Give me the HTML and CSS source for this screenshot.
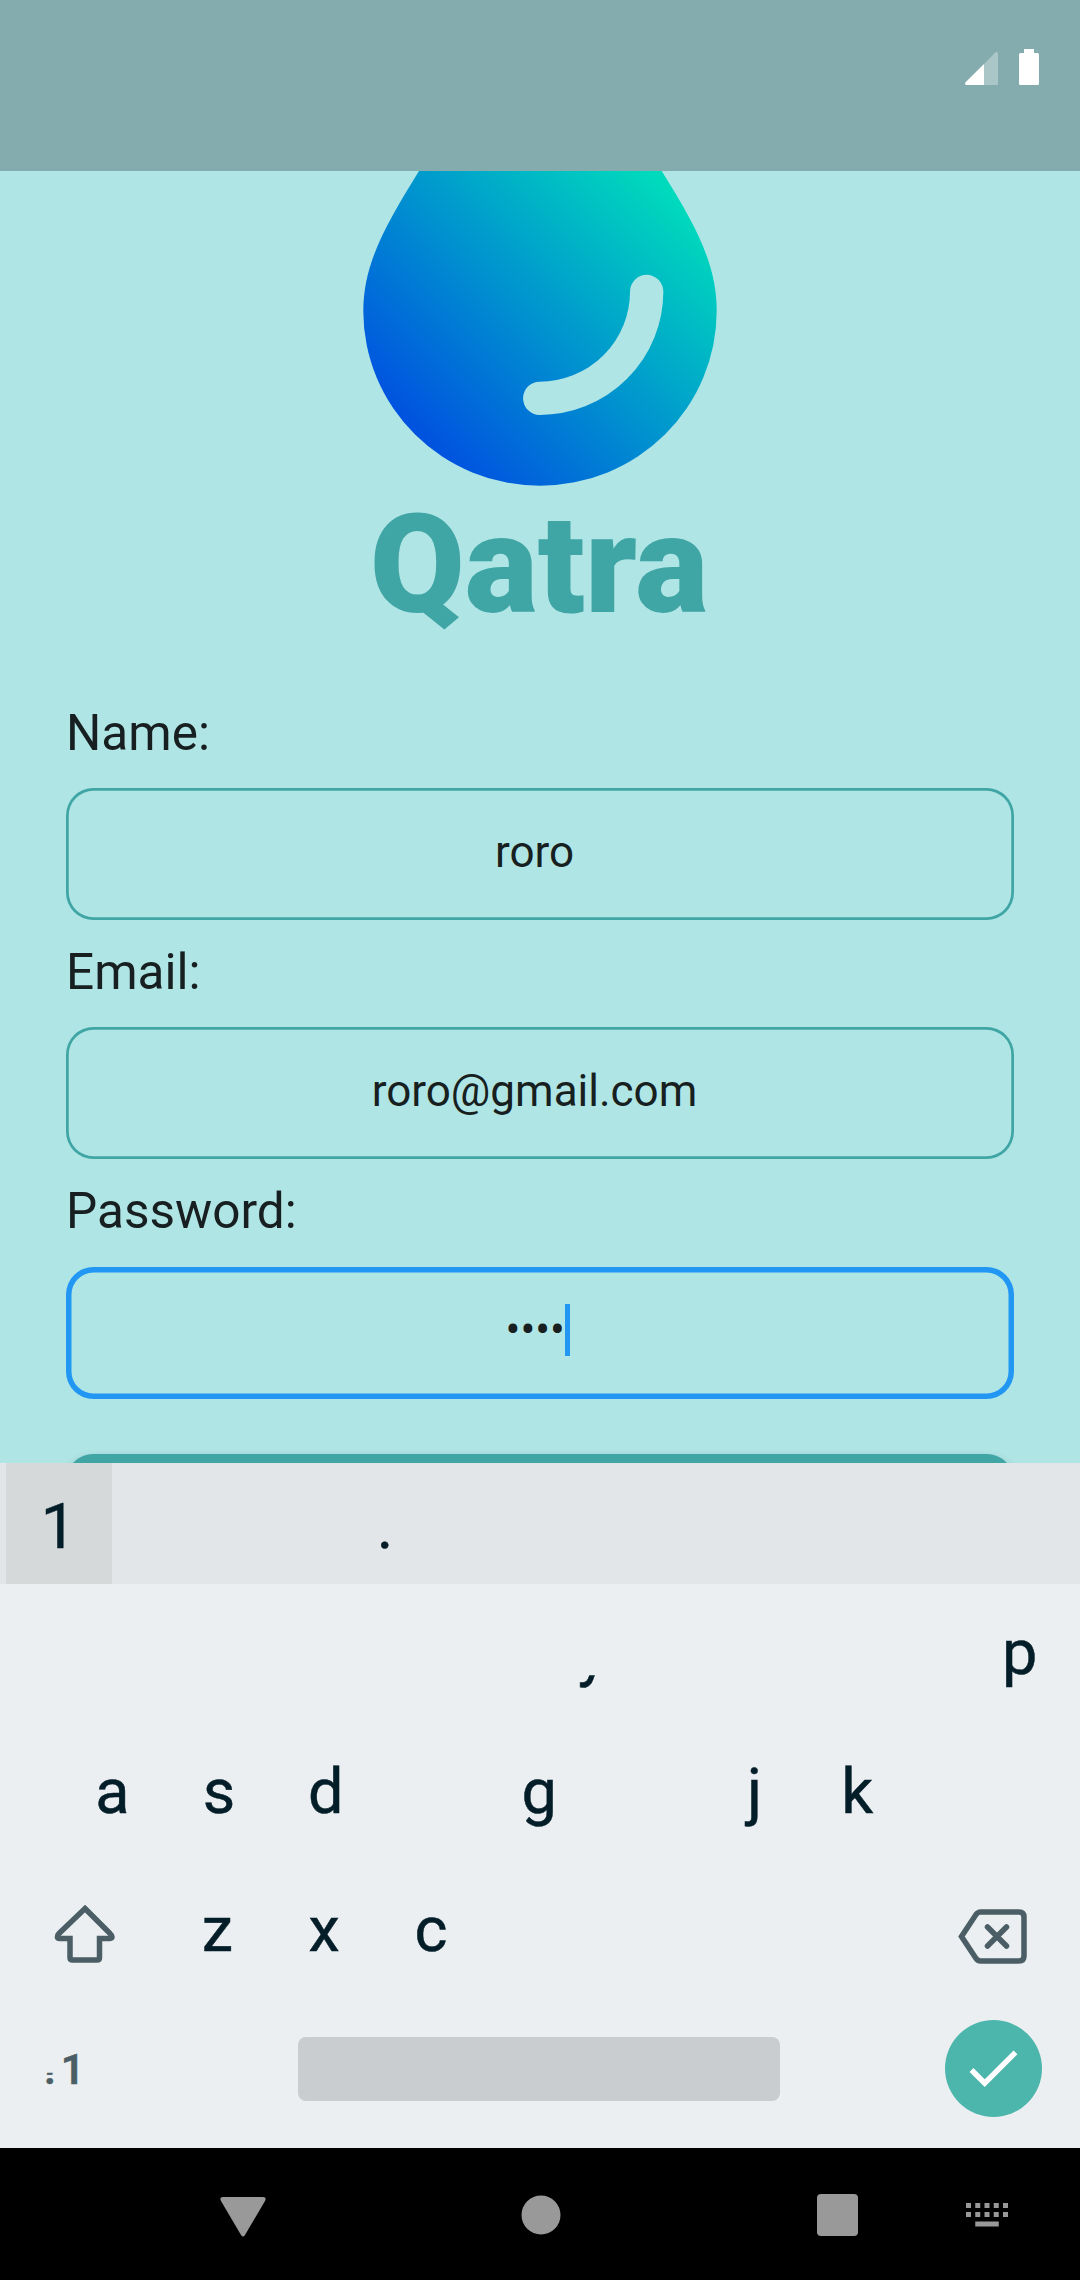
FILE: index.html
```html
<!DOCTYPE html>
<html lang="en">
<head>
<meta charset="utf-8">
<title>Qatra</title>
<link rel="stylesheet" href="styles.css">
</head>
<body>
<div class="screen">
  <header class="status">
    <svg class="signal" viewBox="0 0 33 33"><path d="M19 12V33H32a1 1 0 0 0 1-1V1.500Q33 0 31.500 0 30.800 0 30 .8L19 12z" fill="#fff" fill-opacity=".32"/><path d="M19 12V33H1.500Q0 33 0 31.500 0 30.800 .8 30z" fill="#fff"/></svg>
    <svg class="battery" viewBox="0 0 20 36"><path d="M5 0H15V4H18.500Q20 4 20 5.500V34.500Q20 36 18.500 36H1.500Q0 36 0 34.500V5.500Q0 4 1.500 4H5z" fill="#fff"/></svg>
  </header>

  <main class="page">
    <svg class="drop" viewBox="363 171 354 315">
      <defs>
        <linearGradient id="water" gradientUnits="userSpaceOnUse" x1="430" y1="452" x2="680" y2="202">
          <stop offset="0" stop-color="#0051e0"/>
          <stop offset="1" stop-color="#00dabc"/>
        </linearGradient>
      </defs>
      <path d="M419 171C385 226 363.300 264 363.300 311A176.700 174.700 0 0 0 716.700 311C716.700 264 696 226 661.700 171z" fill="url(#water)"/>
      <path d="M646.700 291.500A107 107 0 0 1 539.700 398.300" fill="none" stroke="#b0e5e6" stroke-width="33.300" stroke-linecap="round"/>
    </svg>
    <h1 class="brand">Qatra</h1>
    <form class="form">
      <div class="group"><div class="label">Name:</div><div class="field">roro</div></div>
      <div class="group"><div class="label">Email:</div><div class="field">roro@gmail.com</div></div>
      <div class="group"><div class="label">Password:</div><div class="field focused">••••<span class="caret"></span></div></div>
      <div class="submit"></div>
    </form>
  </main>

  <section class="keyboard">
    <div class="numbers"><span class="pressed">1</span><span></span><span></span><span class="dot">.</span></div>
    <div class="row top"><span class="tail">y</span><span class="last">p</span></div>
    <div class="row home"><span>a</span><span>s</span><span>d</span><span></span><span>g</span><span></span><span class="j">j</span><span class="k">k</span><span></span></div>
    <div class="row bottom">
      <svg class="shift" viewBox="0 0 62 60"><path d="M31 4.500L56 29.500C59 32 58.500 34.500 56 34.500H45.500V53.500Q45.500 56 43 56H18.500Q16 56 16 53.500V34.500H5.500C3 34.500 2.500 32 5 29.500z" fill="none" stroke="#4b5d65" stroke-width="5.500"/></svg>
      <span>z</span><span>x</span><span>c</span>
      <svg class="erase" viewBox="0 0 69 55"><path d="M3.500 27.500L18 5.500Q20 3 22.500 3H61Q66 3 66 8V47Q66 52 61 52H22.500Q20 52 18 49.500z" fill="none" stroke="#4b5d65" stroke-width="5.500"/><path d="M29.500 18L48.500 37M48.500 18L29.500 37" stroke="#4b5d65" stroke-width="5.500" stroke-linecap="round"/></svg>
    </div>
    <div class="row actions">
      <span class="symbols"><span class="mark">?</span><span>1</span></span>
      <span class="space"></span>
      <span class="done"><svg viewBox="0 0 97 97"><path d="M26.500 50L39.700 63.200 70.500 32.400" fill="none" stroke="#fff" stroke-width="5.500"/></svg></span>
    </div>
  </section>

  <nav class="nav">
    <svg class="back" viewBox="0 0 46 40"><path d="M3 0H43Q47 0 45 4L25 38Q23 41 21 38L1 4Q-1 0 3 0z"/></svg>
    <svg class="home-icon" viewBox="0 0 40 40"><circle cx="20" cy="20" r="19.500"/></svg>
    <svg class="recent" viewBox="0 0 41 42"><rect width="41" height="42" rx="4"/></svg>
    <svg class="ime" viewBox="0 0 42 24"><path d="M0 0h5v5H0zM9.250 0h5v5h-5zM18.500 0h5v5h-5zM27.750 0h5v5h-5zM37 0h5v5h-5zM0 9h5v5H0zM9.250 9h5v5h-5zM18.500 9h5v5h-5zM27.750 9h5v5h-5zM37 9h5v5h-5zM9.250 18.500h23.500v5H9.250z"/></svg>
  </nav>
</div>
</body>
</html>
```
FILE: styles.css
```css
body { margin: 0; }
* { box-sizing: border-box; }
svg { display: block; flex: none; }

.screen {
  width: 1080px;
  height: 2280px;
  display: flex;
  flex-direction: column;
  overflow: hidden;
  background: #b0e5e6;
  font-family: Roboto, sans-serif;
}

.status {
  height: 171px;
  flex: none;
  display: flex;
  justify-content: flex-end;
  gap: 21px;
  padding: 49px 41px 0 0;
  background: #84abad;
}
.signal { width: 33px; height: 33px; margin-top: 3px; }
.battery { width: 20px; height: 36px; }

.page {
  height: 1292px;
  flex: none;
  overflow: hidden;
}
.drop { width: 354px; height: 315px; margin: 0 auto; }
.brand {
  margin: -1px 0 0;
  padding-right: 2px;
  font-size: 137.5px;
  line-height: 161px;
  font-weight: 900;
  text-align: center;
  color: #40a6a5;
}
.form { padding: 57.6px 66px 0; }
.group { height: 239.25px; }
.label {
  height: 84.5px;
  font-size: 49.5px;
  line-height: 58px;
  color: #171f20;
}
.field {
  height: 132px;
  display: flex;
  align-items: center;
  justify-content: center;
  padding: 0 11px 5px 0;
  border-radius: 27.5px;
  box-shadow: inset 0 0 0 2.75px #40a6a5;
  font-size: 44px;
  color: #171f20;
}
.focused { box-shadow: inset 0 0 0 5.5px #2196f3; padding-right: 4px; }
.caret { width: 5.5px; height: 52px; background: #2196f3; }
.submit {
  height: 132px;
  margin-top: 32.4px;
  border-radius: 27.5px;
  background: #40a6a5;
  box-shadow: 0 5px 10px rgba(0, 0, 0, .3);
}

.keyboard {
  height: 685px;
  flex: none;
  background: #ebeff1;
  color: #041e29;
  font-size: 63px;
  -webkit-text-stroke: .5px currentColor;
}
.numbers {
  height: 121px;
  display: grid;
  grid-template-columns: repeat(10, 106px);
  padding: 0 6px;
  background: #e2e6e9;
}
.numbers span {
  display: flex;
  align-items: center;
  justify-content: center;
  padding: 6px 1px 0 0;
}
.numbers .pressed { background: #d5d9da; }
.numbers .dot { padding-left: 17px; }

.row {
  height: 138.5px;
  display: grid;
  grid-template-columns: repeat(10, 106.8px);
  align-items: center;
  justify-items: center;
  padding: 0 7px 0 5px;
  line-height: 74px;
}
.tail { grid-column: 6; clip-path: inset(59px -4px -4px -4px); }
.last { grid-column: 10; }
.home { padding: 0 59px; grid-template-columns: repeat(9, 106.7px); }
.j { padding-left: 4px; }
.k { padding-right: 4px; }
.bottom { grid-template-columns: 159px repeat(7, 106.8px) 1fr; }
.shift { width: 62px; height: 60px; margin-top: 7px; }
.erase { width: 69px; height: 55px; grid-column: 9; margin-top: 12px; }
.actions {
  display: flex;
  justify-content: space-between;
  padding: 0 38px 0 40px;
}
.symbols {
  width: 258px;
  display: flex;
  padding-top: 2px;
  font-size: 42px;
  font-weight: 600;
  line-height: 50px;
  color: #4b5d65;
}
.mark { clip-path: inset(28px 0 0 0); }
.space { width: 482px; height: 64px; border-radius: 8px; background: #c9cdd0; }
.done {
  width: 97px;
  height: 97px;
  margin-left: 165px;
  border-radius: 50%;
  background: #4db6ac;
}

.nav {
  height: 132px;
  flex: none;
  display: flex;
  align-items: flex-start;
  padding: 46px 0 0 220px;
  background: #000;
}
.nav svg { fill: #999; }
.back { width: 46px; height: 40px; margin: 3px 255px 0 0; }
.home-icon { width: 40px; height: 40px; margin: 1px 256px 0 0; }
.recent { width: 41px; height: 42px; margin-right: 108px; }
.ime { width: 42px; height: 24px; margin-top: 9px; }
```
